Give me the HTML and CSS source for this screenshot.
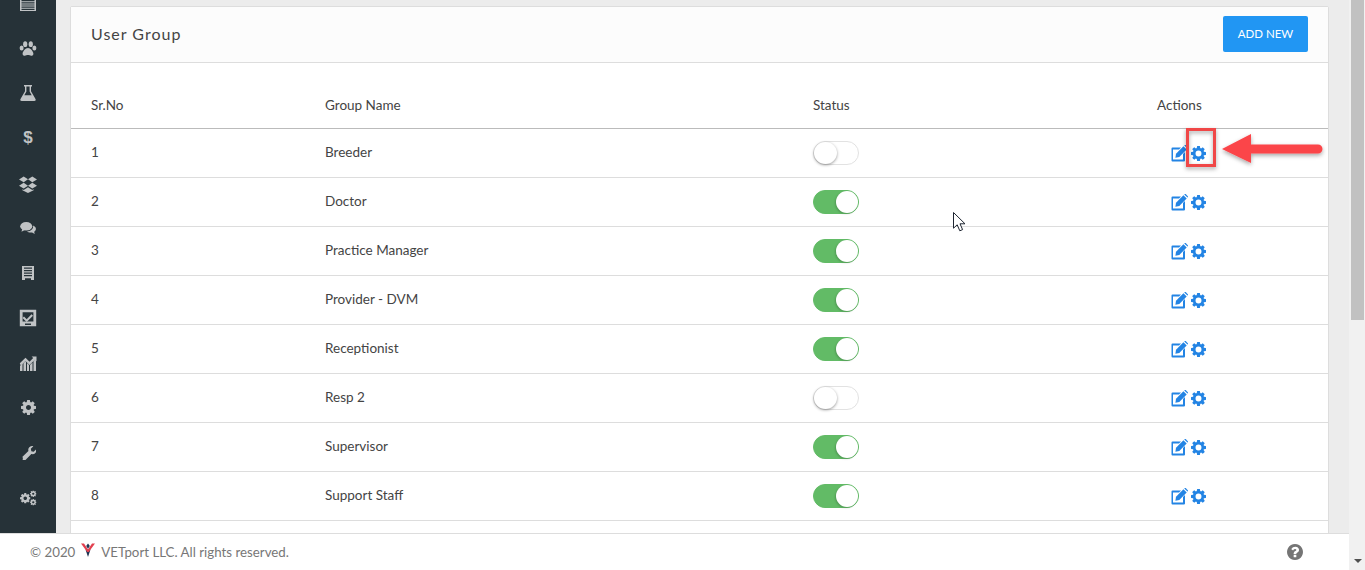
FILE: index.html
```html
<!DOCTYPE html>
<html lang="en">
<head>
<meta charset="utf-8">
<title>User Group</title>
<link rel="stylesheet" href="styles.css">
</head>
<body>
<svg class="defs" aria-hidden="true">
  <symbol id="i-cog" viewBox="128 128 1536 1536"><path d="M1152 896q0-106-75-181t-181-75-181 75-75 181 75 181 181 75 181-75 75-181zm512-109v222q0 12-8 23t-20 13l-185 28q-19 54-39 91 35 50 107 138 10 12 10 25t-9 23q-27 37-99 108t-94 71q-12 0-26-9l-138-108q-44 23-91 38-16 136-29 186-7 28-36 28h-222q-14 0-24.5-8.5t-11.5-21.5l-28-184q-49-16-90-37l-141 107q-10 9-25 9-14 0-25-11-126-114-165-168-7-10-7-23 0-12 8-23 15-21 51-66.5t54-70.5q-27-50-41-99l-183-27q-13-2-21-12.5t-8-23.5v-222q0-12 8-23t19-13l186-28q14-46 39-92-40-57-107-138-10-12-10-24 0-10 9-23 26-36 98.5-107.5t94.5-71.5q13 0 26 10l138 107q44-23 91-38 16-136 29-186 7-28 36-28h222q14 0 24.5 8.5t11.5 21.5l28 184q49 16 90 37l142-107q9-9 24-9 13 0 25 10 129 119 165 170 7 8 7 22 0 12-8 23-15 21-51 66.5t-54 70.5q26 50 41 98l183 28q13 2 21 12.5t8 23.5z"/></symbol>
  <symbol id="i-gear" viewBox="128 128 1536 1536"><path fill-rule="evenodd" d="M1200 896a304 304 0 1 0-608 0a304 304 0 1 0 608 0zm464-109v222q0 12-8 23t-20 13l-185 28q-19 54-39 91 35 50 107 138 10 12 10 25t-9 23q-27 37-99 108t-94 71q-12 0-26-9l-138-108q-44 23-91 38-16 136-29 186-7 28-36 28h-222q-14 0-24.500-8.500t-11.500-21.500l-28-184q-49-16-90-37l-141 107q-10 9-25 9-14 0-25-11-126-114-165-168-7-10-7-23 0-12 8-23 15-21 51-66.500t54-70.500q-27-50-41-99l-183-27q-13-2-21-12.500t-8-23.500v-222q0-12 8-23t19-13l186-28q14-46 39-92-40-57-107-138-10-12-10-24 0-10 9-23 26-36 98.500-107.500t94.500-71.500q13 0 26 10l138 107q44-23 91-38 16-136 29-186 7-28 36-28h222q14 0 24.500 8.500t11.500 21.500l28 184q49 16 90 37l142-107q9-9 24-9 13 0 25 10 129 119 165 170 7 8 7 22 0 12-8 23-15 21-51 66.500t-54 70.500q26 50 41 98l183 28q13 2 21 12.500t8 23.500z"/></symbol>
  <symbol id="i-edit" viewBox="0 0 18 17"><path fill-rule="evenodd" d="M2.500 2.500H11L9 4.500H3v10h10V9l2-2v8.500q0 1-1 1H2.500q-1 0-1-1V3.500q0-1 1-1z"/><path d="M6 8.700 13.400 1.300l3.300 3.300-7.400 7.400-3.900.7z"/><path d="M14.300.5l.4-.4q.5-.4 1 0l2.100 2.100q.4.500 0 1l-.4.400z"/></symbol>
  <symbol id="i-help" viewBox="128 128 1536 1536"><path d="M1024 1376v-192q0-14-9-23t-23-9h-192q-14 0-23 9t-9 23v192q0 14 9 23t23 9h192q14 0 23-9t9-23zm256-672q0-88-55.5-163t-138.5-116-170-41q-243 0-371 213-15 24 8 42l132 100q7 6 19 6 16 0 25-12 53-68 86-92 34-24 86-24 48 0 85.5 26t37.5 59q0 38-20 61t-68 45q-63 28-115.5 86.5t-52.5 125.5v36q0 14 9 23t23 9h192q14 0 23-9t9-23q0-19 21.5-49.5t54.5-49.5q32-18 49-28.5t46-35 44.5-48 28-60.5 12.5-81zm384 192q0 209-103 385.5t-279.5 279.5-385.5 103-385.5-103-279.5-279.5-103-385.5 103-385.5 279.5-279.5 385.5-103 385.5 103 279.5 279.5 103 385.5z"/></symbol>
</svg>

<div class="app">
  <div class="content">
    <div class="workspace">
      <nav class="sidebar">
        <span class="nav-item"><svg class="nav-icon" viewBox="0 0 18 18"><path d="M1 1h16v16H1z M2.500 3v2h13V3z M2.500 6v1.200h13V6z M2.500 8.200v1.200h13V8.200z M2.500 10.400v1.200h13v-1.200z M2.500 12.600v1.200h13v-1.200z M2.500 14.800V16h13v-1.200z" fill-rule="evenodd"/></svg></span>
        <span class="nav-item"><svg class="nav-icon" viewBox="0 -1 18 18"><ellipse cx="2.600" cy="8" rx="2" ry="2.500"/><ellipse cx="6.200" cy="4.200" rx="2.100" ry="2.900"/><ellipse cx="11.800" cy="4.200" rx="2.100" ry="2.900"/><ellipse cx="15.400" cy="8" rx="2" ry="2.500"/><path d="M9 8c-2.600 0-5.400 3.400-5.400 5.800 0 1.500 1 2 2.100 2 1.200 0 2.100-.7 3.300-.7s2.100.7 3.300.7c1.100 0 2.100-.5 2.100-2C14.400 11.400 11.600 8 9 8z"/></svg></span>
        <span class="nav-item"><svg class="nav-icon" viewBox="0 0 18 18"><path d="M5 1h8v1.400h-1v4.800l4.500 7.800c.6 1.100 0 2-1.200 2H2.700c-1.200 0-1.800-.9-1.200-2L6 7.200V2.400H5zM7.400 2.400v5.200L5.300 11.200h7.400L10.600 7.600V2.400z" fill-rule="evenodd"/></svg></span>
        <span class="nav-item nav-dollar">$</span>
        <span class="nav-item"><svg class="nav-icon nav-over" viewBox="0 0 18 18"><path d="M4.700 2.500 9 5.200 4.700 8.300 0 5.500zM13.300 2.500 18 5.500 13.300 8.300 9 5.200zM4.700 8.700 9 11.800 4.700 14.600 0 11.700zM13.300 8.700 18 11.700 13.300 14.600 9 11.800zM3.400 15.200 4.700 16 9 13.200 13.300 16 14.600 15.200 14.600 16.300 9 19 3.400 16.300z"/></svg></span>
        <span class="nav-item"><svg class="nav-icon nav-chat" viewBox="0 0 18 18"><ellipse cx="7" cy="7" rx="6.800" ry="4.800"/><path d="M2.500 10l-.8 3.200 3.600-2z"/><path d="M14.800 6.300c1.900.8 3.100 2.200 3.100 3.800 0 1.300-.8 2.400-2 3.200l.7 2.400-3-1.700c-.6.100-1.100.2-1.700.2-1.600 0-3-.5-4-1.300 4 0 7.300-2.700 6.900-6.600z"/></svg></span>
        <span class="nav-item"><svg class="nav-doc" viewBox="0 0 12 14"><path d="M0 0h12v14H9v-1.800H3V14H0zM2 1.500v1.200h8V1.500zM2 4v1.200h8V4zM2 6.500v1.200h8V6.500zM2 9v1.200h8V9z" fill-rule="evenodd"/></svg></span>
        <span class="nav-item"><svg class="nav-icon" viewBox="0 0 18 18"><path d="M.8.800h16.400v16.400H.8zM3.600 3.200v9.400h10.800V3.200zM6 16h6v-1.500H6z" fill-rule="evenodd"/><path d="M5 7.500l2.700 2.700L12.500 5.200l1.500 1.500-6.300 6.300L3.500 9z"/></svg></span>
        <span class="nav-item"><svg class="nav-icon" viewBox="0 0 18 18"><path d="M1 17v-5l2.500-2.500V17zM4.500 17V9l2.500-2V17zM8 17v-8l2 2v6zM11 17v-6l2.500-2.500V17zM14.500 17V7l2.500-2.500V17z"/><path d="M.8 9.300l5.700-5.500 4 4 3.700-3.700-1.600-1.600H17.500v4.800l-1.600-1.600-5.400 5.400-4-4-4.700 4.600z"/></svg></span>
        <span class="nav-item"><svg class="nav-icon nav-cog"><use href="#i-cog"/></svg></span>
        <span class="nav-item"><svg class="nav-icon nav-wrench" viewBox="0 0 18 18"><path d="M1.500 14.300l7.400-7.200c-.5-2 .1-3.700 1.500-4.800 1.300-1 3-1.200 4.400-.7l-3 2.900.6 2.900 2.800.7 3-2.900c.4 1.500.1 3.100-1 4.300-1.200 1.300-2.900 1.800-4.800 1.300l-7.300 7.500c-.7.700-1.900.7-2.600 0s-.7-1.900 0-2.700z"/></svg></span>
        <span class="nav-item"><svg class="nav-icon" viewBox="0 0 18 18"><use href="#i-cog" x="1" y="4" width="10.500" height="10.500"/><use href="#i-cog" x="11" y="1.500" width="6.500" height="6.500"/><use href="#i-cog" x="11" y="10" width="6.500" height="6.500"/></svg></span>
      </nav>

      <main class="main">
        <section class="card">
          <header class="card-head">
            <h1 class="card-title">User Group</h1>
            <button class="btn-add" type="button">ADD NEW</button>
          </header>
          <table class="grid">
            <colgroup><col class="col-sr"><col class="col-name"><col class="col-status"><col class="col-actions"></colgroup>
            <thead>
              <tr><th>Sr.No</th><th>Group Name</th><th>Status</th><th>Actions</th></tr>
            </thead>
            <tbody>
              <tr><td>1</td><td>Breeder</td><td><span class="toggle"></span></td><td><span class="actions"><svg class="ic-edit"><use href="#i-edit"/></svg><svg class="ic-cog"><use href="#i-gear"/></svg></span></td></tr>
              <tr><td>2</td><td>Doctor</td><td><span class="toggle on"></span></td><td><span class="actions"><svg class="ic-edit"><use href="#i-edit"/></svg><svg class="ic-cog"><use href="#i-gear"/></svg></span></td></tr>
              <tr><td>3</td><td>Practice Manager</td><td><span class="toggle on"></span></td><td><span class="actions"><svg class="ic-edit"><use href="#i-edit"/></svg><svg class="ic-cog"><use href="#i-gear"/></svg></span></td></tr>
              <tr><td>4</td><td>Provider - DVM</td><td><span class="toggle on"></span></td><td><span class="actions"><svg class="ic-edit"><use href="#i-edit"/></svg><svg class="ic-cog"><use href="#i-gear"/></svg></span></td></tr>
              <tr><td>5</td><td>Receptionist</td><td><span class="toggle on"></span></td><td><span class="actions"><svg class="ic-edit"><use href="#i-edit"/></svg><svg class="ic-cog"><use href="#i-gear"/></svg></span></td></tr>
              <tr><td>6</td><td>Resp 2</td><td><span class="toggle"></span></td><td><span class="actions"><svg class="ic-edit"><use href="#i-edit"/></svg><svg class="ic-cog"><use href="#i-gear"/></svg></span></td></tr>
              <tr><td>7</td><td>Supervisor</td><td><span class="toggle on"></span></td><td><span class="actions"><svg class="ic-edit"><use href="#i-edit"/></svg><svg class="ic-cog"><use href="#i-gear"/></svg></span></td></tr>
              <tr><td>8</td><td>Support Staff</td><td><span class="toggle on"></span></td><td><span class="actions"><svg class="ic-edit"><use href="#i-edit"/></svg><svg class="ic-cog"><use href="#i-gear"/></svg></span></td></tr>
            </tbody>
          </table>
        </section>
      </main>
    </div>

    <footer class="footer">
      <span class="copyright">© 2020
        <svg class="logo" viewBox="0 0 14 14"><path d="M4.500 6.500 9.500 6.500 7 14z" fill="#1f3553"/><path d="M0 .5 3 .5 7 6.500 11 .5 14 .5 7.800 9 6.200 9z" fill="#e2404f"/><path d="M5.200 3 7 .5 8.800 3 7 5.800z" fill="#1f3553"/></svg>
        VETport LLC. All rights reserved.</span>
      <svg class="help"><use href="#i-help"/></svg>
    </footer>
  </div>

  <div class="scrollbar">
    <div class="thumb"></div>
    <div class="arrow-down"></div>
  </div>

  <svg class="callout" viewBox="0 0 150 50">
    <defs><filter id="soft" x="-20%" y="-30%" width="140%" height="170%"><feDropShadow dx="0" dy="2" stdDeviation="2" flood-color="#000" flood-opacity=".35"/></filter></defs>
    <g filter="url(#soft)">
      <rect x="2.500" y="2.500" width="27" height="36" fill="none" stroke="#f04646" stroke-width="3"/>
      <path d="M37 22 66 7V17.500H133a4.500 4.500 0 0 1 0 9H66V36z" fill="#fb4448"/>
    </g>
  </svg>
  <svg class="pointer" viewBox="0 0 13 20"><path d="M.5.500V16.200l3.700-3.400 2.600 6 2.800-1.200-2.600-5.800h5z" fill="#fff" stroke="#1d2430" stroke-width="1"/></svg>
</div>
</body>
</html>
```

FILE: styles.css
```css
* { box-sizing: border-box; }
html, body { margin: 0; height: 100%; overflow: hidden; }
body { font-family: Lato, "Noto Sans", sans-serif; font-size: 13.5px; color: #444; background: #fff; }
.defs { width: 0; height: 0; position: absolute; }

.app { display: flex; height: 570px; position: relative; overflow: hidden; }
.content { flex: 1; min-width: 0; display: flex; flex-direction: column; }
.workspace { flex: 1; min-height: 0; display: flex; overflow: hidden; }

.sidebar { width: 56px; flex: none; background: #263238; color: #c0c3c5; display: flex; flex-direction: column; align-items: center; overflow: hidden; }
.nav-item { flex: none; height: 45px; width: 100%; display: flex; align-items: center; justify-content: center; }
.nav-item:first-child { margin-top: -20px; }
.nav-icon { width: 18px; height: 18px; fill: currentColor; }
.nav-over { overflow: visible; }
.nav-chat { width: 16px; height: 16px; }
.nav-doc { width: 12px; height: 14px; fill: currentColor; }
.nav-cog { width: 15px; height: 15px; }
.nav-wrench { width: 15px; height: 15px; }
.nav-dollar { font-family: "Liberation Sans", sans-serif; font-weight: 700; font-size: 17px; }

.main { flex: 1; min-width: 0; background: #ececec; padding: 6px 20px 0 14px; }
.card { background: #fff; border: 1px solid #ddd; border-radius: 2px; height: 600px; }
.card-head { height: 56px; display: flex; align-items: center; justify-content: space-between; padding: 0 20px 2px; background: #fcfcfc; border-bottom: 1px solid #ddd; }
.card-title { margin: 0; font-size: 16px; font-weight: 400; letter-spacing: 1px; }
.btn-add { width: 85px; height: 36px; border: 0; border-radius: 2px; background: #2196f3; color: #fff; font: 400 11.5px Lato, "Noto Sans", sans-serif; padding: 0; }

.grid { width: 100%; border-collapse: separate; border-spacing: 0; table-layout: fixed; }
.col-sr { width: 234px; }
.col-name { width: 488px; }
.col-status { width: 344px; }
.grid th { height: 66px; padding: 0 0 14px 20px; vertical-align: bottom; text-align: left; font-weight: 400; border-bottom: 1px solid #bbb; line-height: 17px; }
.grid td { height: 49px; padding: 0 0 2px 20px; border-bottom: 1px solid #ddd; vertical-align: middle; line-height: 17px; }

.toggle { display: block; margin-top: 1px; width: 46px; height: 24px; border-radius: 12px; border: 1px solid #e2e2e2; background: #fff; position: relative; }
.toggle::after { content: ""; position: absolute; left: 0; top: 0; width: 23px; height: 22px; border-radius: 50%; background: #fff; box-shadow: 0 1px 3px rgba(0,0,0,.4); }
.toggle.on { background: #62bb66; border-color: #62bb66; }
.toggle.on::after { left: auto; right: 0; width: 22px; box-shadow: -1px 1px 2px rgba(0,0,0,.18); }

.actions { display: flex; align-items: center; gap: 3px; padding-left: 13px; margin-top: 2px; }
.ic-edit { width: 18px; height: 17px; fill: #2384e4; }
.ic-cog { width: 15px; height: 15px; fill: #2384e4; }

.footer { flex: none; height: 37px; display: flex; align-items: center; justify-content: space-between; padding: 0 46px 0 30px; background: #fff; border-top: 1px solid #ddd; }
.copyright { font-size: 13.3px; color: #777; display: flex; align-items: center; gap: 6px; }
.logo { width: 14px; height: 14px; margin: -4px 0 0; }
.help { width: 16px; height: 16px; fill: #757575; }

.scrollbar { width: 16px; flex: none; background: #f1f1f1; position: relative; padding-left: 2px; }
.thumb { width: 13px; height: 320px; background: #c1c1c1; }
.arrow-down { position: absolute; left: 5px; bottom: 7px; width: 0; height: 0; border-left: 4px solid transparent; border-right: 4px solid transparent; border-top: 4px solid #505050; }

.callout { position: absolute; left: 1185px; top: 127px; width: 150px; height: 50px; overflow: visible; }
.pointer { position: absolute; left: 953px; top: 212px; width: 13px; height: 20px; }
```
